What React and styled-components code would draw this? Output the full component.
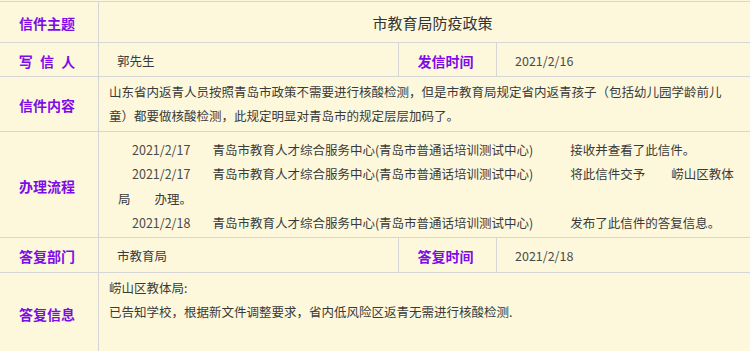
import React from "react";
import styled, { createGlobalStyle } from "styled-components";

const Global = createGlobalStyle`
  html, body { margin: 0; padding: 0; overflow: hidden; background: #fdf8db; }
  body { font-family: "Noto Sans CJK SC", "Noto Sans", sans-serif; }
`;

const Page = styled.div`
  padding-top: 1px;
  width: 766px;
`;

const Sheet = styled.div`
  display: grid;
  grid-template-columns: 98px 299px 97px 269px;
  grid-template-rows: 40px 33px 54px 105px 34px 80px;
  gap: 1px;
  padding-top: 1px;
  background: #d6d6d6;
`;

const Label = styled.div`
  background: #fdf8db;
  display: flex;
  align-items: center;
  justify-content: center;
  padding: 2px 4px 0 0;
  font-size: 14px;
  font-weight: bold;
  color: #7d0ce8;
  word-spacing: ${(p) => p.$spread || 0}px;
  white-space: pre;
`;

const Cell = styled.div`
  background: #fdf8db;
  grid-column: ${(p) => (p.$wide ? "2 / 5" : "auto")};
  display: flex;
  align-items: ${(p) => (p.$top ? "flex-start" : "center")};
  justify-content: ${(p) => (p.$center ? "center" : "flex-start")};
  padding: ${(p) => p.$pad || "2px 0 0 18px"};
  font-size: 12.5px;
  line-height: 24px;
  color: #3a3a3a;
`;

const Title = styled.span`
  font-size: 15px;
  color: #333;
`;

const Stamp = styled.span`
  font-size: 12.5px;
  color: #4a4a4a;
`;

const Para = styled.div`
  line-height: 24px;
`;

const Flow = styled.div`
  line-height: 24.4px;
  color: #3a3a3a;
`;

const Step = styled.div`
  text-indent: 14px;
`;

const When = styled.span`
  color: #4a4a4a;
`;

const Seg = styled.span`
  margin-left: ${(p) => p.$gap}px;
`;

const steps = [
  { when: "2021/2/17", act: [["接收并查看了此信件。", 37]] },
  {
    when: "2021/2/17",
    act: [
      ["将此信件交予", 37],
      ["崂山区教体局", 26],
      ["办理。", 24],
    ],
  },
  { when: "2021/2/18", act: [["发布了此信件的答复信息。", 37]] },
];

export default function App() {
  return (
    <Page>
      <Global />
      <Sheet>
        <Label>信件主题</Label>
        <Cell $wide $center $pad="2px 0 0 0">
          <Title>市教育局防疫政策</Title>
        </Cell>

        <Label $spread={4}>写 信 人</Label>
        <Cell>郭先生</Cell>
        <Label>发信时间</Label>
        <Cell>
          <Stamp>2021/2/16</Stamp>
        </Cell>

        <Label>信件内容</Label>
        <Cell $wide $top $pad="3px 40px 0 10px">
          <Para>
            山东省内返青人员按照青岛市政策不需要进行核酸检测，但是市教育局规定省内返青孩子（包括幼儿园学龄前儿童）都要做核酸检测，此规定明显对青岛市的规定层层加码了。
          </Para>
        </Cell>

        <Label>办理流程</Label>
        <Cell $wide $top $pad="6px 24px 0 19px">
          <Flow>
            {steps.map((s, i) => (
              <Step key={i}>
                <When>{s.when}</When>
                <Seg $gap={22}>青岛市教育人才综合服务中心(青岛市普通话培训测试中心)</Seg>
                {s.act.map(([t, g], j) => (
                  <Seg key={j} $gap={g}>
                    {t}
                  </Seg>
                ))}
              </Step>
            ))}
          </Flow>
        </Cell>

        <Label>答复部门</Label>
        <Cell>市教育局</Cell>
        <Label>答复时间</Label>
        <Cell>
          <Stamp>2021/2/18</Stamp>
        </Cell>

        <Label>答复信息</Label>
        <Cell $wide $top $pad="3px 40px 0 10px">
          <Para>
            <div>崂山区教体局:</div>
            <div>已告知学校，根据新文件调整要求，省内低风险区返青无需进行核酸检测.</div>
          </Para>
        </Cell>
      </Sheet>
    </Page>
  );
}
